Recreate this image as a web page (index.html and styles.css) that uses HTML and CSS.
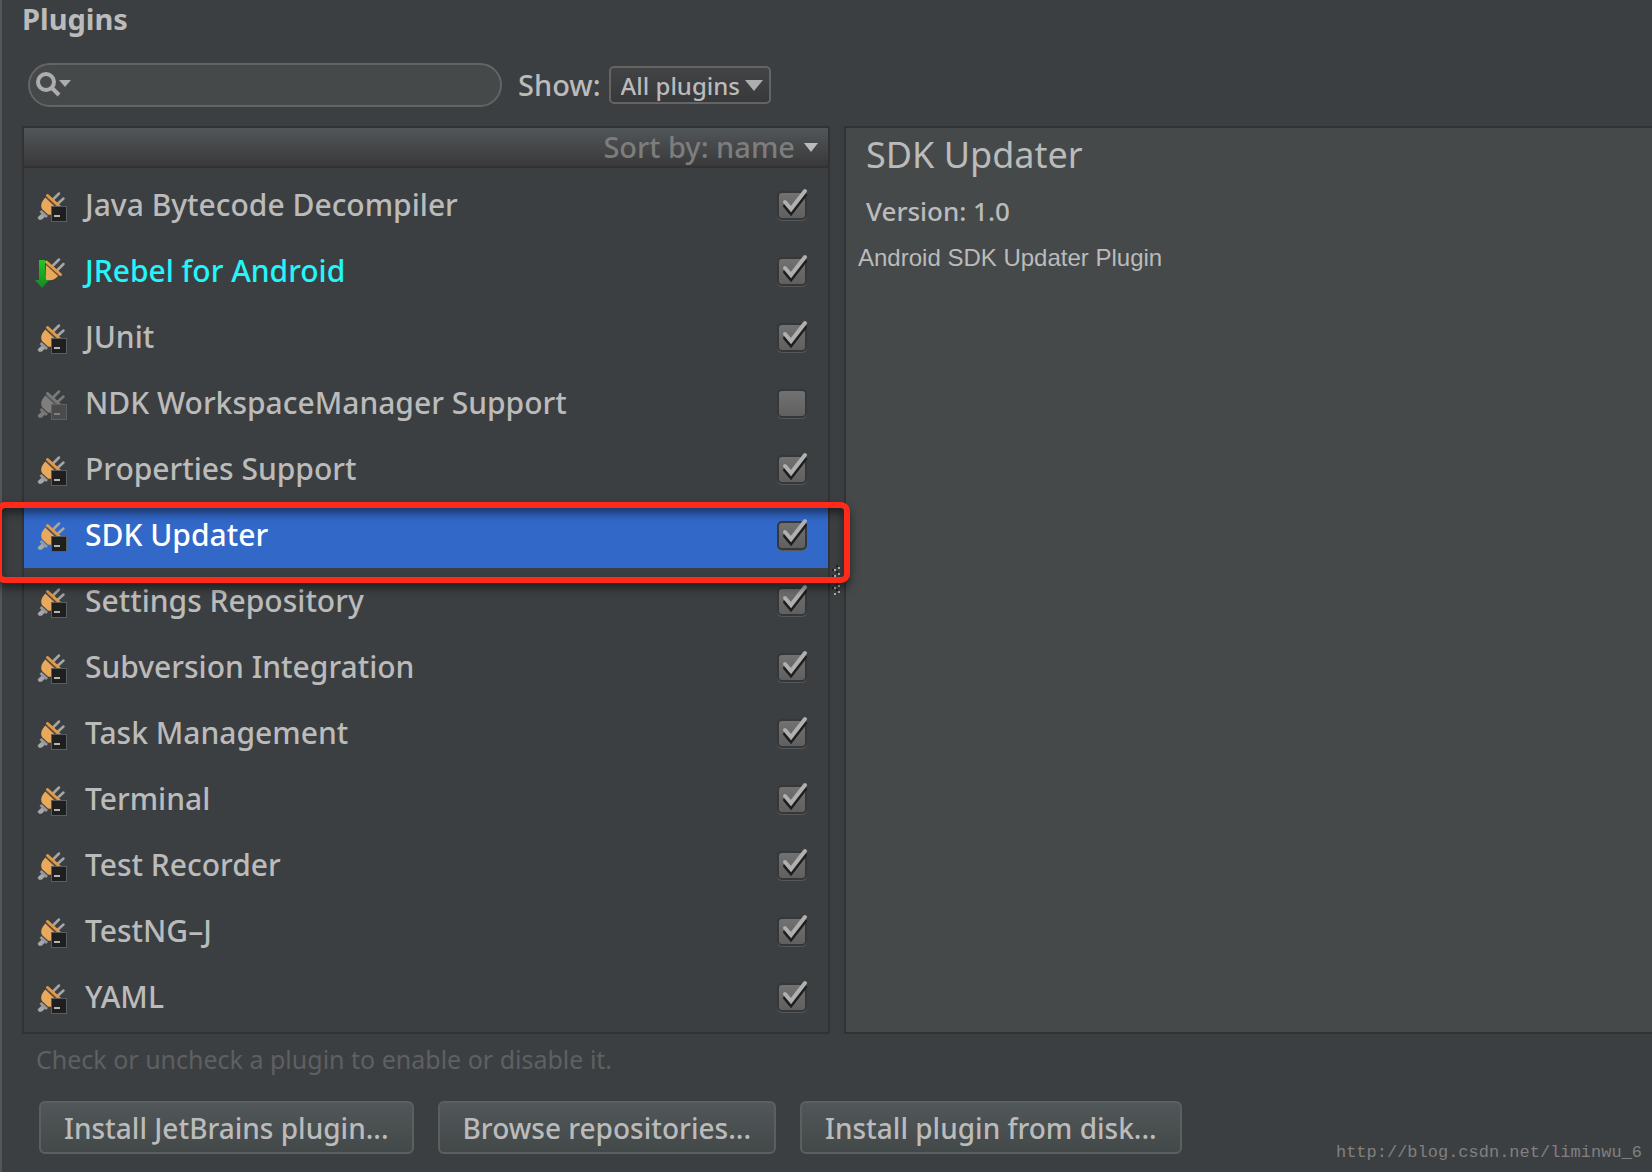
FILE: index.html
```html
<!DOCTYPE html>
<html lang="en">
<head>
<meta charset="utf-8">
<title>Plugins</title>
<link rel="stylesheet" href="styles.css">
</head>
<body>
<svg class="sprite" aria-hidden="true">
  <defs>
    <linearGradient id="arrow-fill" x1="0" y1="0" x2="0" y2="1">
      <stop offset="0" stop-color="#25c425"/><stop offset="1" stop-color="#128a22"/>
    </linearGradient>
    <symbol id="plug" viewBox="0 0 30 30">
      <path class="prong" d="M16.500 7L22 1.500M21 11.500L26.500 6.500"/>
      <path class="knob" d="M1.500 24.500L6 20.500L9 23.500L5 27.500L2.500 28L0.500 26Z"/>
      <path class="prong-base" d="M3.500 19L10 25"/>
      <path class="bulb" d="M8.500 5.500L21.500 18C18 22 15 23.500 11 22.500L5 17C3 13 5 9 8.500 5.500Z"/>
      <path class="groove" d="M9.500 5.500L21 16.500"/>
      <path class="collar" d="M10.500 3.500L22.500 14.500"/>
      <rect class="badge" x="14.500" y="14.500" width="15" height="15"/>
      <path class="dash" d="M17 24H23"/>
    </symbol>
    <symbol id="plug-update" viewBox="0 0 30 30">
      <path class="prong" d="M16 7.500L22 1.500M20.500 12L26.500 6"/>
      <path class="bulb" d="M9 6L21.500 17.500C18 22 13 23.500 8.500 21.500Z"/>
      <path class="groove" d="M9 6L21.500 17.500"/>
      <path class="collar" d="M9.500 4L23.500 16.500"/>
      <path fill="url(#arrow-fill)" d="M2 2H8V22H12L5 30L-2 22H2Z"/>
    </symbol>
  </defs>
</svg>
<main class="settings">
  <h1 class="title">Plugins</h1>

  <div class="toolbar">
    <div class="search">
      <svg class="search-icon" viewBox="0 0 36 26" aria-hidden="true">
        <circle cx="10" cy="10" r="8"/><path d="M16 16L23 23"/><path class="tip" d="M23 8H35L29 15Z"/>
      </svg>
      <input class="search-input" type="text" aria-label="Search plugins">
    </div>
    <label class="show-label" for="show">Show:</label>
    <select class="show-select" id="show"><option>All plugins</option></select>
  </div>

  <div class="panes">
    <section class="list-pane">
      <div class="list-head">
        <button class="sort" type="button">Sort by: name
          <svg class="sort-arrow" viewBox="0 0 14 9" aria-hidden="true"><path d="M0 0H14L7 9Z"/></svg>
        </button>
      </div>
      <ul class="plugins">
        <li class="plugin"><svg class="icon"><use href="#plug"/></svg><label class="name" for="p1">Java Bytecode Decompiler</label><input class="check" id="p1" type="checkbox" checked></li>
        <li class="plugin plugin-update"><svg class="icon"><use href="#plug-update"/></svg><label class="name" for="p2">JRebel for Android</label><input class="check" id="p2" type="checkbox" checked></li>
        <li class="plugin"><svg class="icon"><use href="#plug"/></svg><label class="name" for="p3">JUnit</label><input class="check" id="p3" type="checkbox" checked></li>
        <li class="plugin plugin-off"><svg class="icon"><use href="#plug"/></svg><label class="name" for="p4">NDK WorkspaceManager Support</label><input class="check" id="p4" type="checkbox"></li>
        <li class="plugin"><svg class="icon"><use href="#plug"/></svg><label class="name" for="p5">Properties Support</label><input class="check" id="p5" type="checkbox" checked></li>
        <li class="plugin plugin-selected"><svg class="icon"><use href="#plug"/></svg><label class="name" for="p6">SDK Updater</label><input class="check" id="p6" type="checkbox" checked><span class="callout"></span></li>
        <li class="plugin"><svg class="icon"><use href="#plug"/></svg><label class="name" for="p7">Settings Repository</label><input class="check" id="p7" type="checkbox" checked></li>
        <li class="plugin"><svg class="icon"><use href="#plug"/></svg><label class="name" for="p8">Subversion Integration</label><input class="check" id="p8" type="checkbox" checked></li>
        <li class="plugin"><svg class="icon"><use href="#plug"/></svg><label class="name" for="p9">Task Management</label><input class="check" id="p9" type="checkbox" checked></li>
        <li class="plugin"><svg class="icon"><use href="#plug"/></svg><label class="name" for="p10">Terminal</label><input class="check" id="p10" type="checkbox" checked></li>
        <li class="plugin"><svg class="icon"><use href="#plug"/></svg><label class="name" for="p11">Test Recorder</label><input class="check" id="p11" type="checkbox" checked></li>
        <li class="plugin"><svg class="icon"><use href="#plug"/></svg><label class="name" for="p12">TestNG–J</label><input class="check" id="p12" type="checkbox" checked></li>
        <li class="plugin"><svg class="icon"><use href="#plug"/></svg><label class="name" for="p13">YAML</label><input class="check" id="p13" type="checkbox" checked></li>
      </ul>
    </section>
    <div class="splitter">
      <svg class="grip" viewBox="0 0 8 30" aria-hidden="true">
        <path class="grip-dark" d="M4 0h2v2h-2zM0 4h2v2h-2zM4 6h2v2h-2zM0 10h2v2h-2zM4 12h2v2h-2zM4 18h2v2h-2zM0 22h2v2h-2zM4 24h2v2h-2z"/>
        <path class="grip-light" d="M6 2h2v2h-2zM2 4h2v2h-2zM6 8h2v2h-2zM2 10h2v2h-2zM6 14h2v2h-2zM2 16h2v2h-2zM6 20h2v2h-2zM2 22h2v2h-2zM6 26h2v2h-2zM2 28h2v2h-2z"/>
      </svg>
    </div>
    <section class="detail-pane">
      <h2 class="detail-title">SDK Updater</h2>
      <p class="detail-version">Version: 1.0</p>
      <p class="detail-text">Android SDK Updater Plugin</p>
    </section>
  </div>

  <p class="hint">Check or uncheck a plugin to enable or disable it.</p>

  <div class="footer">
    <button class="button" type="button">Install JetBrains plugin...</button>
    <button class="button" type="button">Browse repositories...</button>
    <button class="button" type="button">Install plugin from disk...</button>
    <span class="watermark">http://blog.csdn.net/liminwu_6</span>
  </div>
</main>
</body>
</html>
```

FILE: styles.css
```css
* { box-sizing: border-box; }

body {
  margin: 0;
  background: #3c3f41;
  color: #bbbbbb;
  font-family: "Noto Sans", "Open Sans", sans-serif;
  font-size: 30px;
  font-weight: 500;
  overflow-x: hidden;
}

.sprite { position: absolute; width: 0; height: 0; }

h1, h2, p, ul { margin: 0; padding: 0; }

.settings {
  min-height: 100vh;
  padding-left: 20px;
  border-left: 2px solid #555555;
}

.title { font-size: 29px; line-height: 38px; }

.toolbar {
  display: flex;
  align-items: center;
  height: 46px;
  margin: 24px 0 18px;
  padding-left: 6px;
}

.search {
  display: flex;
  align-items: center;
  width: 474px;
  height: 44px;
  padding: 0 16px 0 6px;
  border: 2px solid #646464;
  border-radius: 22px;
  background: #45494a;
}

.search-icon {
  flex: none;
  width: 36px;
  height: 26px;
  fill: none;
  stroke: #adadad;
  stroke-width: 4;
}

.search-icon .tip { fill: #adadad; stroke: none; }

.search-input {
  flex: 1;
  min-width: 0;
  margin-left: 8px;
  border: 0;
  outline: 0;
  background: none;
  color: #bbbbbb;
  font: inherit;
  font-size: 26px;
}

.show-label { margin-left: 16px; font-size: 29px; line-height: 46px; }

.show-select {
  appearance: none;
  width: 162px;
  height: 38px;
  margin-left: 8px;
  padding: 0 0 0 10px;
  border: 2px solid #646464;
  border-radius: 5px;
  background: url("data:image/svg+xml,%3Csvg xmlns='http://www.w3.org/2000/svg' width='18' height='11'%3E%3Cpath d='M0 0H18L9 11Z' fill='%23adadad'/%3E%3C/svg%3E") no-repeat right 6px center, linear-gradient(#414345, #37393b);
  color: #bbbbbb;
  font-family: inherit;
  font-size: 24px;
  font-weight: inherit;
}

.panes { display: grid; grid-template-columns: minmax(0, 1fr) 14px minmax(0, 1fr); }

.list-pane { border: 2px solid #323232; }

.list-head {
  display: flex;
  justify-content: flex-end;
  height: 40px;
  border-bottom: 2px solid #323232;
  background: linear-gradient(#515658, #39393b);
}

.sort {
  display: flex;
  align-items: center;
  gap: 9px;
  padding: 0 10px 0 0;
  border: 0;
  background: none;
  color: #7d7d7d;
  font-family: inherit;
  font-size: 29px;
  font-weight: inherit;
  line-height: 38px;
}

.sort-arrow { width: 14px; height: 9px; fill: #bbbbbb; }

.plugins { padding: 4px 0 2px; list-style: none; }

.plugin {
  position: relative;
  display: flex;
  align-items: center;
  height: 66px;
  padding: 0 19px 0 13px;
}

.icon { flex: none; width: 30px; height: 30px; margin-top: 4px; overflow: visible; }
.icon use, symbol { overflow: visible; }

.name { flex: 1; margin-left: 18px; line-height: 40px; }

.prong { fill: none; stroke: #a4a6a8; stroke-width: 2.500; stroke-linecap: round; }
.prong-base { fill: none; stroke: #96999b; stroke-width: 3; }
.knob { fill: #a4a6a8; }
.bulb { fill: #e8a95c; }
.groove { fill: none; stroke: #6b4a28; stroke-width: 1.500; }
.collar { fill: none; stroke: #e29a48; stroke-width: 3; stroke-linecap: round; }
.badge { fill: #1f1f1f; stroke: #5a5c5e; }
.dash { stroke: #b4b4b4; stroke-width: 2; }

.plugin-off .icon { filter: grayscale(1) brightness(0.7) contrast(0.5); }

.plugin-update { color: #24f5fb; }
.plugin-selected { background: #3268c8; color: #ffffff; z-index: 2; }

.check {
  appearance: none;
  flex: none;
  width: 32px;
  height: 34px;
  margin: 0;
  background: url("data:image/svg+xml,%3Csvg xmlns='http://www.w3.org/2000/svg' width='32' height='34'%3E%3ClinearGradient id='g' x2='0' y2='1'%3E%3Cstop stop-color='%23727272'/%3E%3Cstop offset='1' stop-color='%235f5f5f'/%3E%3C/linearGradient%3E%3Crect y='5' width='30' height='28' rx='5' fill='%23555759'/%3E%3Crect x='1' y='4' width='28' height='27' rx='4' fill='url(%23g)' stroke='%23353738' stroke-width='2'/%3E%3C/svg%3E") no-repeat;
}

.check:checked {
  background: url("data:image/svg+xml,%3Csvg xmlns='http://www.w3.org/2000/svg' width='32' height='34' fill='none'%3E%3ClinearGradient id='g' x2='0' y2='1'%3E%3Cstop stop-color='%23727272'/%3E%3Cstop offset='1' stop-color='%235f5f5f'/%3E%3C/linearGradient%3E%3Crect y='5' width='30' height='28' rx='5' fill='%23555759'/%3E%3Crect x='1' y='4' width='28' height='27' rx='4' fill='url(%23g)' stroke='%23353738' stroke-width='2'/%3E%3Cpath d='M8 18L14 25L28 7' stroke='%231e1e1e' stroke-width='4' stroke-linecap='round'/%3E%3Cpath d='M8 14L14 21L28 3' stroke='%23b0b0b0' stroke-width='4' stroke-linecap='round'/%3E%3C/svg%3E") no-repeat;
}

/* red highlight drawn over the selected row */
.callout {
  position: absolute;
  top: 0;
  right: -22px;
  bottom: -15px;
  left: -28px;
  border: 6px solid #ff2a1a;
  border-radius: 9px;
  box-shadow: 0 5px 10px rgba(0, 0, 0, 0.5), inset 0 5px 10px rgba(0, 0, 0, 0.5);
  pointer-events: none;
}

.splitter { display: flex; align-items: center; justify-content: flex-start; padding-left: 2px; }
.grip { width: 8px; height: 30px; }
.grip-dark { fill: #202122; }
.grip-light { fill: #b0b0b0; }

.detail-pane {
  padding-left: 12px;
  border: 2px solid #323232;
  border-right: 0;
  background: #45494a;
}

.detail-title { padding-left: 8px; font-size: 36px; font-weight: 400; line-height: 54px; }
.detail-version { padding-left: 8px; font-size: 26px; line-height: 58px; }
.detail-text { font-family: "Liberation Sans", Arial, sans-serif; font-size: 24px; font-weight: 400; line-height: 36px; }

.hint { margin-top: 8px; padding-left: 14px; color: #5e6062; font-size: 25px; font-weight: 400; line-height: 34px; }

.footer { display: flex; align-items: flex-start; gap: 24px; margin-top: 25px; padding: 0 10px 15px 17px; }

.button {
  height: 53px;
  padding: 0 23px;
  border: 2px solid #5c5f5f;
  border-radius: 6px;
  background: linear-gradient(#515658, #434849);
  color: #bbbbbb;
  font-family: inherit;
  font-size: 28px;
  font-weight: inherit;
}

.watermark {
  margin: 40px 0 0 auto;
  color: #808080;
  font-family: "Liberation Mono", monospace;
  font-size: 17px;
  font-weight: 400;
  line-height: 24px;
}
```
